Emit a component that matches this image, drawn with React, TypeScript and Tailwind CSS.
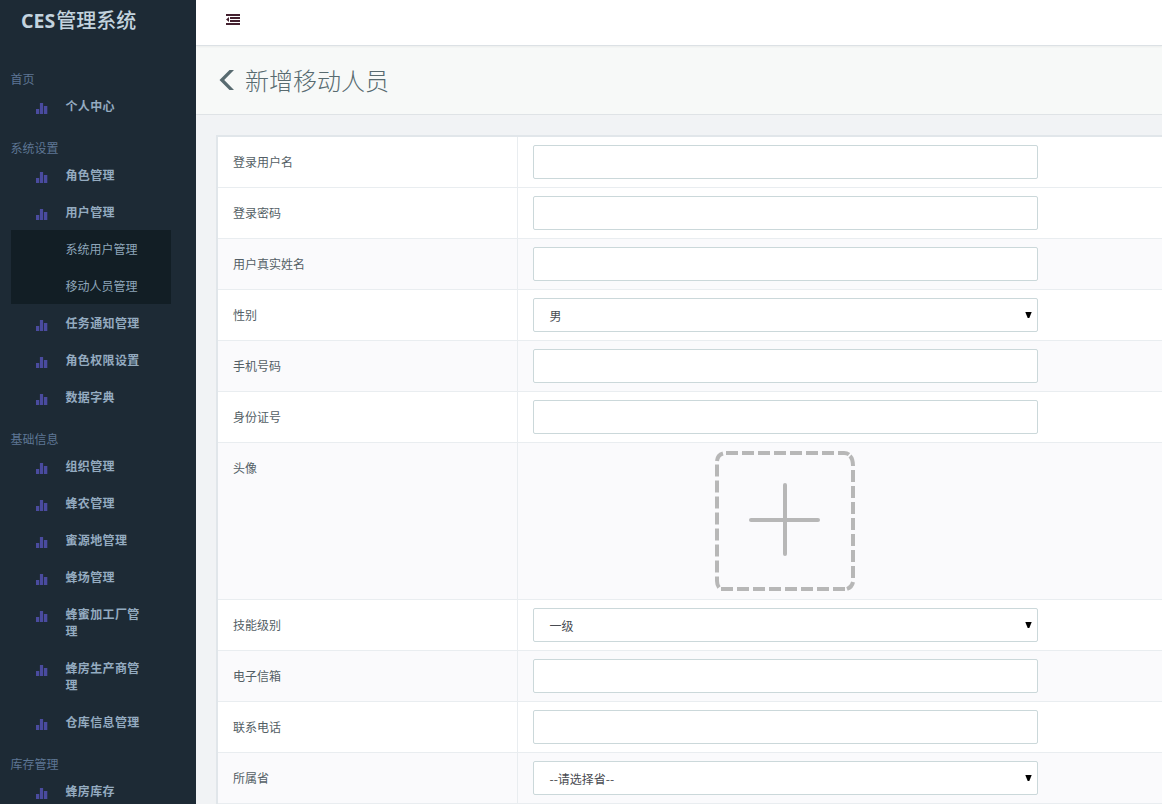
type Item = { label: string; children?: string[] };
type Section = { title: string; items: Item[] };

const sections: Section[] = [
  { title: "首页", items: [{ label: "个人中心" }] },
  {
    title: "系统设置",
    items: [
      { label: "角色管理" },
      { label: "用户管理", children: ["系统用户管理", "移动人员管理"] },
      { label: "任务通知管理" },
      { label: "角色权限设置" },
      { label: "数据字典" },
    ],
  },
  {
    title: "基础信息",
    items: [
      { label: "组织管理" },
      { label: "蜂农管理" },
      { label: "蜜源地管理" },
      { label: "蜂场管理" },
      { label: "蜂蜜加工厂管理" },
      { label: "蜂房生产商管理" },
      { label: "仓库信息管理" },
    ],
  },
  { title: "库存管理", items: [{ label: "蜂房库存" }] },
];

type Field = { label: string; kind: "text" | "select" | "avatar"; value?: string; striped?: boolean };

const fields: Field[] = [
  { label: "登录用户名", kind: "text" },
  { label: "登录密码", kind: "text" },
  { label: "用户真实姓名", kind: "text", striped: true },
  { label: "性别", kind: "select", value: "男" },
  { label: "手机号码", kind: "text", striped: true },
  { label: "身份证号", kind: "text" },
  { label: "头像", kind: "avatar", striped: true },
  { label: "技能级别", kind: "select", value: "一级" },
  { label: "电子信箱", kind: "text", striped: true },
  { label: "联系电话", kind: "text" },
  { label: "所属省", kind: "select", value: "--请选择省--", striped: true },
];

function BarsIcon() {
  return (
    <svg className="mt-4 h-[11px] w-3 shrink-0" viewBox="0 0 12 11" fill="#4a4b9f">
      <rect x="-0.2" y="6" width="3.4" height="5" />
      <rect x="3.9" y="0" width="3.2" height="11" />
      <rect x="7.9" y="3" width="3.4" height="8" />
    </svg>
  );
}

function OutdentIcon() {
  return (
    <svg className="h-[11px] w-[14px]" viewBox="0 0 14 11" fill="#43212f" shapeRendering="crispEdges">
      <rect x="0" y="0" width="14" height="2" />
      <rect x="4" y="3" width="10" height="2" />
      <rect x="4" y="6" width="10" height="2" />
      <rect x="0" y="9" width="14" height="2" />
      <path d="M3 3v5L0 5.5z" shapeRendering="auto" />
    </svg>
  );
}

function Sidebar() {
  return (
    <aside className="h-full w-[196px] shrink-0 overflow-hidden bg-[#1d2a35]">
      <div className="flex h-10 items-center pl-[21px] text-[20px] leading-none font-medium text-[#c3d3de]">
        <span className="mr-px pt-px font-['Noto_Sans','Open_Sans',sans-serif] text-[19.5px] font-bold">CES</span>
        <span>管理系统</span>
      </div>
      <nav className="pt-[15px]">
        {sections.map((section) => (
          <div key={section.title}>
            <h2 className="h-8 pt-[15px] pl-[10.5px] leading-[17px] font-normal text-[#5d7694]">{section.title}</h2>
            {section.items.map((item) => (
              <div key={item.label}>
                <div className="flex pr-12 pl-9">
                  <BarsIcon />
                  <span className="ml-[17.5px] w-[78px] py-[10px] leading-[17px] font-bold tracking-[0.35px] text-[#94abc0]">
                    {item.label}
                  </span>
                </div>
                {item.children && (
                  <div className="ml-[11px] w-[160px] bg-[#121e25]">
                    {item.children.map((child) => (
                      <div key={child} className="h-[37px] pl-[54.5px] leading-[38px] text-[#8ea6ba]">
                        {child}
                      </div>
                    ))}
                  </div>
                )}
              </div>
            ))}
          </div>
        ))}
      </nav>
    </aside>
  );
}

function AvatarPicker() {
  return (
    <svg
      className="ml-[182px] h-[140px] w-[140px]"
      viewBox="0 0 140 140"
      fill="none"
      stroke="#b7b7b7"
      strokeWidth="4"
    >
      <path d="M11 2H119M138 19V127M6 138H114M2 13.5V121.5" strokeDasharray="12 4" />
      <path d="M2 10Q2.5 4 8 2.5M123 2H129Q132 2 134 3.5M135 5Q138 8 138 15M138 131Q137 136 132 138M118 138H130M2 125.5V130Q2 134 4 136.5" />
      <path d="M70 34V103M36 69H103" strokeLinecap="round" />
    </svg>
  );
}

function Control({ field }: { field: Field }) {
  if (field.kind === "avatar") return <AvatarPicker />;
  return (
    <div className="flex h-[34px] items-center justify-between rounded-[2px] border border-[#cbd8da] bg-white pr-[5px] pl-[15.5px] text-[#484b51]">
      <span className="pt-px">{field.value}</span>
      {field.kind === "select" && (
        <svg className="h-[6px] w-[7px]" viewBox="0 0 7 6">
          <path d="M0.3 0H6.7L4.3 6H2.7Z" fill="#000" />
        </svg>
      )}
    </div>
  );
}

export default function App() {
  return (
    <div className="flex h-[804px] w-[1162px] overflow-hidden bg-[#f1f3f5] font-['Noto_Sans_CJK_SC',sans-serif] text-[12px]">
      <Sidebar />
      <main className="flex min-w-0 flex-1 flex-col">
        <header className="z-10 h-[46px] shrink-0 border-b border-[#dce1e5] bg-white pt-[14px] pl-[30px] shadow-[0_1px_2px_rgba(0,0,0,0.05)]">
          <OutdentIcon />
        </header>
        <div className="flex h-[69px] shrink-0 items-center border-b border-[#dfe3e6] bg-[#f7f9f8] pl-[23px] text-[#586b70]">
          <svg className="mr-[11px] h-5 w-[15px]" viewBox="0 0 15 20" fill="currentColor">
            <path d="M10.5 0H15L5.2 10L15 20H10.5L0.5 10Z" />
          </svg>
          <h1 className="text-[24px] leading-none font-light">新增移动人员</h1>
        </div>
        <div className="mt-5 ml-5 overflow-hidden border-t-2 border-l-2 border-[#e1e6ea] bg-white">
          {fields.map((field) => (
            <div
              key={field.label}
              className={`flex border-b border-[#e9edf0] ${field.striped ? "bg-[#fafafc]" : "bg-white"}`}
            >
              <div className="w-[300px] shrink-0 border-r border-[#e9edf0] pt-4 pl-[15px] leading-[18px] text-[#535e65]">
                {field.label}
              </div>
              <div className="w-[535px] px-[15px] py-2">
                <Control field={field} />
              </div>
            </div>
          ))}
        </div>
      </main>
    </div>
  );
}
